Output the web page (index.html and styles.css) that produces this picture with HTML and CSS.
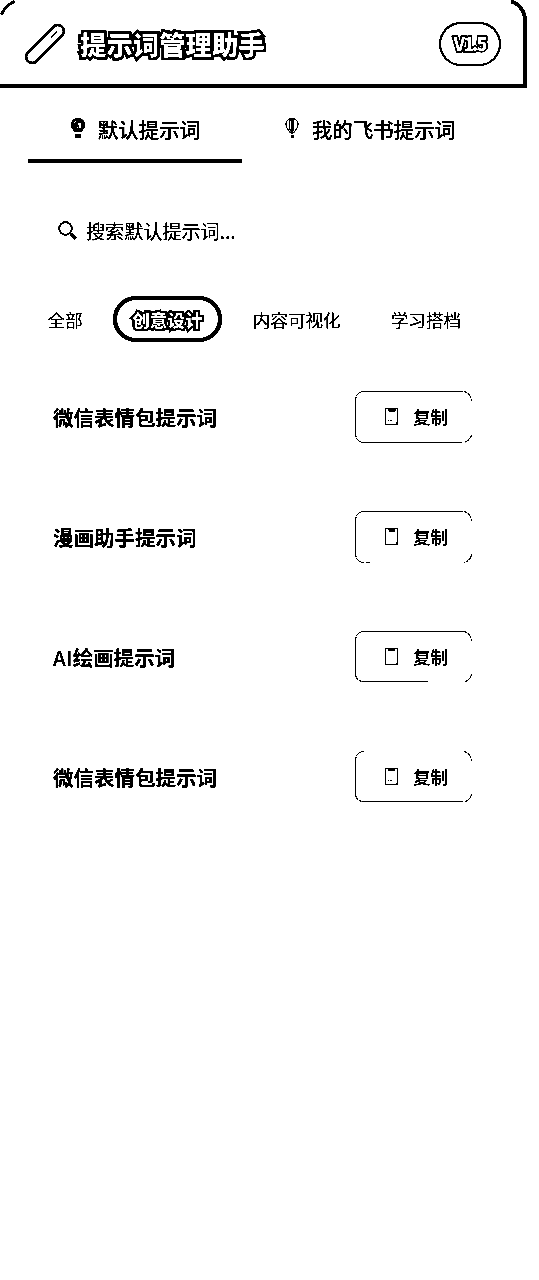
FILE: index.html
```html
<!DOCTYPE html>
<html lang="zh-CN">
<head>
<meta charset="utf-8">
<title>提示词管理助手</title>
<link rel="stylesheet" href="styles.css">
</head>
<body>
<main class="app">
  <header class="header">
    <svg class="corner corner-left" viewBox="0 0 16 16"><path d="M1.5 14.5C3 10 8 3.5 14.5 1.5" fill="none" stroke="#000" stroke-width="2.4"/></svg>
    <svg class="corner corner-right" viewBox="0 0 16 20"><path d="M0 1.5C8 3.5 13.7 11 14 20" fill="none" stroke="#000" stroke-width="3.6"/></svg>
    <svg class="logo" viewBox="0 0 42 42"><rect x="-3.2" y="14.800" width="48.400" height="12.400" rx="6.200" transform="rotate(-45 21 21)" fill="#fff" stroke="#000" stroke-width="2.4"/><path d="M27 14.5l6-6" stroke="#000" stroke-width="1.2"/></svg>
    <h1 class="title">提示词管理助手</h1>
    <span class="version">V1.5</span>
  </header>
  <nav class="tabs">
    <a class="tab active"><svg class="bulb" viewBox="0 0 14 20"><path d="M7 0C3 0 0 3 0 7c0 3 2 4 3 7h8c1-3 3-4 3-7 0-4-3-7-7-7z"/><path d="M4 16h6v4H4z"/><path d="M3 4h1v1H3zM4 3h1v1H4zM7 5h3v5H8V7H7zM6 9h1v1H6z" fill="#fff"/></svg>默认提示词</a>
    <a class="tab"><svg class="bulb" viewBox="0 0 14 20"><path d="M7 .6C3 .6 1 3 1 6.500c0 3.500 3 6 4.500 8.500h3C10 12.500 13 10 13 6.500 13 3 11 .6 7 .6z" fill="#fff" stroke="#000"/><path d="M6 1h3v11l-1 2H6l-2-3V3z"/><path d="M5.500 3v8" stroke="#fff"/><path d="M6 17h3v2.500H6z"/></svg>我的飞书提示词</a>
  </nav>
  <div class="search"><svg class="lens" viewBox="0 0 20 20"><circle cx="7.500" cy="7.500" r="6.300" fill="none" stroke="#000" stroke-width="1.700"/><path d="M11.500 12l2.500 1.500" stroke="#000" stroke-width="2"/><path d="M13.500 13.500l4 4" stroke="#000" stroke-width="3.800"/></svg><span>搜索默认提示词...</span></div>
  <div class="filters">
    <span class="filter">全部</span>
    <span class="filter selected">创意设计</span>
    <span class="filter">内容可视化</span>
    <span class="filter">学习搭档</span>
  </div>
  <section class="list">
    <article class="card"><h2>微信表情包提示词</h2>
      <div class="copy"><svg class="outline" viewBox="0 0 118 52"><path d="M8.500 .5H108M.5 9v34M8.500 51.500H107"/><path class="arc" d="M.5 9Q1 1 8.500 .5M.5 43Q1 51 8.500 51.500M109 .5Q115.500 2 116.500 9.500M116.500 44Q115.500 49 109 51.500"/></svg><svg class="clip" viewBox="0 0 14 18"><path d="M.5 .5h12v16H.5z" fill="none" stroke="#000"/><path d="M3 1h8v1l-2 2H5L3 2zM13 13v4H9v-1h2v-2zM3 12h1v1H3zM5 12h2v1H5z"/></svg><span>复制</span></div></article>
    <article class="card"><h2>漫画助手提示词</h2>
      <div class="copy"><svg class="outline" viewBox="0 0 118 52"><path d="M8.500 .5H108M.5 9v34M11 51.500H15"/><path class="arc" d="M.5 9Q1 1 8.500 .5M.5 43Q1 51 8.500 51.500M109 .5Q115.500 2 116.500 9.500M116.500 43Q115.500 50 109 51.500"/></svg><svg class="clip" viewBox="0 0 14 18"><path d="M.5 .5h12v16H.5z" fill="none" stroke="#000"/><path d="M3 1h7v3H4V2H3zM13 14v3H9v-1h2v-2z"/></svg><span>复制</span></div></article>
    <article class="card"><h2><span class="latin">AI</span>绘画提示词</h2>
      <div class="copy"><svg class="outline" viewBox="0 0 118 52"><path d="M8.500 .5H109M.5 9v34M8.500 50.500H73"/><path class="arc" d="M.5 9Q1 1 8.500 .5M.5 43Q1 50 8.500 50.500M109 .5Q115.500 2 116.500 9.500M116.500 43Q115.500 49 110 50.500"/></svg><svg class="clip" viewBox="0 0 14 18"><path d="M.5 .5h12v16H.5z" fill="none" stroke="#000"/><path d="M3 1h7v2H3zM13 14v3H3v-1h8z"/></svg><span>复制</span></div></article>
    <article class="card"><h2>微信表情包提示词</h2>
      <div class="copy"><svg class="outline" viewBox="0 0 118 52"><path d="M.5 9v34M9 50.500H108"/><path class="arc" d="M.5 9Q1 1 8.500 .5M.5 43Q1 50 8.500 50.500M109 .5Q115.500 2 116.500 9.500M116.500 43Q115.500 49 110 50.500"/></svg><svg class="clip" viewBox="0 0 14 18"><path d="M.5 .5h12v16H.5z" fill="none" stroke="#000"/><path d="M3 1h7v2H3zM13 14v3h-2v-2zM3 12h1v1H3zM5 12h2v1H5z"/></svg><span>复制</span></div></article>
  </section>
</main>
</body>
</html>
```
FILE: styles.css
```css
* { box-sizing: border-box; }
html { background: #fff; }
body { margin: 0; color: #000; font-family: "Noto Sans CJK SC", sans-serif; }
.app { width: 539px; height: 1280px; background: #fff; filter: grayscale(1) brightness(.75) contrast(14); overflow: hidden; }
svg { flex: none; display: block; }
h1, h2 { margin: 0; }
.header { position: relative; width: 527px; height: 88px; border-bottom: 4px solid #000; padding: 3px 26px 0 24px; display: flex; align-items: center; }
.header::after { content: ""; position: absolute; right: 0; top: 20px; bottom: 0; width: 4px; background: #000; }
.corner { position: absolute; top: 0; }
.corner-left { left: 0; width: 16px; height: 16px; }
.corner-right { right: 0; width: 16px; height: 20px; }
.logo { width: 42px; height: 42px; margin-right: 14px; }
.title { font-size: 26.4px; line-height: 40px; font-weight: 900; white-space: nowrap; color: #fff; -webkit-text-stroke: 5px #000; paint-order: stroke fill; flex: 1; }
.version { width: 62px; height: 44px; border: 2px solid #000; border-radius: 22px; display: flex; align-items: center; justify-content: center; color: #fff; font: 900 18px/24px "Noto Sans CJK SC", sans-serif; letter-spacing: -2px; padding: 0 1px 2px 0; -webkit-text-stroke: 3px #000; paint-order: stroke fill; }
.tabs { display: flex; margin-left: 28px; height: 75px; }
.tab { width: 214px; height: 75px; display: flex; justify-content: center; align-items: center; gap: 13px; font-size: 20.5px; font-weight: 500; white-space: nowrap; padding: 11px 0 0 1px; border-bottom: 4px solid transparent; }
.tab.active { border-color: #000; }
.tab + .tab { width: 256px; padding-left: 0; }
.bulb { width: 14px; height: 20px; margin-top: -2px; }
.search { height: 52px; margin: 41px 0 0 58px; display: flex; align-items: center; gap: 8px; font-size: 19.100px; }
.search span { padding-top: 2px; }
.lens { width: 20px; height: 20px; margin-top: 2px; }
.filters { margin: 40px 0 0 28px; display: flex; height: 46px; align-items: center; font-size: 17.600px; }
.filter { padding: 0 20.500px 0 19.500px; margin-right: 10px; height: 46px; display: flex; align-items: center; white-space: nowrap; }
.selected { padding: 0 14px 0 15px; margin-right: 11px; border: 4px solid #000; border-radius: 23px; width: 109px; color: #fff; font-weight: 900; -webkit-text-stroke: 4px #000; paint-order: stroke fill; }
.list { margin: 49px 66px 0 53px; display: flex; flex-direction: column; gap: 68px; }
.card { height: 52px; display: flex; justify-content: space-between; align-items: center; }
.card h2 { font-size: 20.500px; font-weight: 700; line-height: 30px; }
.latin { font-weight: 500; letter-spacing: .3px; }
.copy { position: relative; width: 118px; height: 52px; display: flex; align-items: center; padding-left: 30px; gap: 14px; font-size: 17.500px; font-weight: 500; line-height: 24px; }
.copy span { margin-top: -1px; }
.outline { position: absolute; left: 0; top: 0; width: 118px; height: 52px; fill: none; stroke: #000; }
.arc { stroke-dasharray: 3 .6; }
.clip { width: 14px; height: 18px; }
```
